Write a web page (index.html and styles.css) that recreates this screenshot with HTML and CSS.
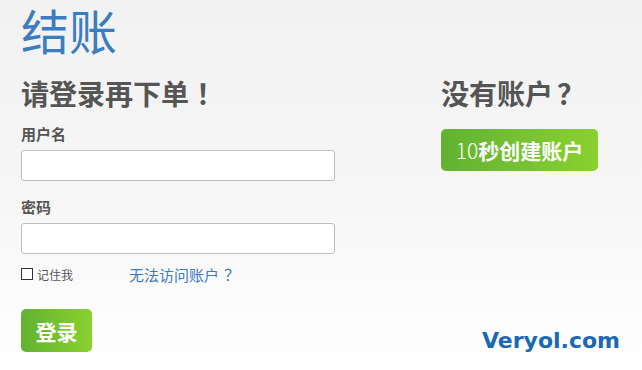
FILE: index.html
```html
<!DOCTYPE html>
<html lang="zh-CN">
<head>
<meta charset="utf-8">
<title>结账</title>
<link rel="stylesheet" href="styles.css">
</head>
<body>
<div class="page">
  <h1 class="title">结账</h1>
  <div class="cols">
    <form class="login">
      <h2 class="heading">请登录再下单<span class="punc">！</span></h2>
      <label class="label">用户名</label>
      <input class="field" type="text">
      <label class="label label-pw">密码</label>
      <input class="field" type="password">
      <div class="row">
        <label class="remember"><span class="box"></span>记住我</label>
        <a class="forgot" href="#">无法访问账户<span class="punc-sm">？</span></a>
      </div>
      <button class="btn btn-login" type="button">登录</button>
    </form>
    <div class="signup">
      <h2 class="heading">没有账户<span class="punc-q">？</span></h2>
      <button class="btn btn-create" type="button"><span class="num">10</span>秒创建账户</button>
    </div>
  </div>
  <div class="brand">Veryol.com</div>
</div>
</body>
</html>
```
FILE: styles.css
```css
html, body {
  margin: 0;
  padding: 0;
}
body {
  width: 642px;
  height: 370px;
  overflow: hidden;
  background: linear-gradient(to bottom, #f2f2f2 0%, #f6f6f6 50%, #ffffff 100%);
  font-family: "Noto Sans CJK SC", sans-serif;
  color: #555;
}
.page {
  position: relative;
  height: 370px;
  padding-left: 21px;
  box-sizing: border-box;
}
.title {
  margin: 0;
  padding-top: 1px;
  font-size: 48px;
  line-height: 56px;
  font-weight: 400;
  color: #3c7cc0;
}
.cols {
  display: flex;
  gap: 106px;
  margin-top: 22px;
}
.login {
  width: 314px;
  display: flex;
  flex-direction: column;
  align-items: flex-start;
  margin: 0;
}
.heading {
  margin: 0;
  font-size: 28px;
  line-height: 28px;
  font-weight: 700;
  color: #555;
}
.punc {
  margin-left: 7px;
}
.punc-q {
  margin-left: 4px;
}
.punc-sm {
  margin-left: 5px;
  font-size: 16px;
}
.label {
  font-size: 15px;
  line-height: 15px;
  font-weight: 700;
  color: #555;
  margin-top: 19px;
}
.label-pw {
  margin-top: 18px;
}
.field {
  margin-top: 9px;
  width: 314px;
  height: 31px;
  box-sizing: border-box;
  border: 1px solid #b9bec4;
  border-radius: 3px;
  background: #fff;
  padding: 0 6px;
}
.row {
  display: flex;
  align-items: center;
  margin-top: 12px;
  height: 16px;
}
.remember {
  display: flex;
  align-items: center;
  font-size: 12px;
  color: #555;
  width: 108px;
}
.box {
  width: 10px;
  height: 10px;
  border: 1px solid #333;
  background: #fff;
  margin-right: 4px;
}
.forgot {
  font-size: 15px;
  color: #3c7cc0;
  text-decoration: none;
}
.btn {
  border: 0;
  border-radius: 5px;
  background: linear-gradient(to right, #62b232 0%, #8ad12f 100%);
  color: #fff;
  font-family: "Noto Sans CJK SC", sans-serif;
  font-weight: 700;
  padding: 0;
  cursor: pointer;
}
.btn-login {
  margin-top: 27px;
  width: 71px;
  height: 43px;
  font-size: 21px;
}
.signup {
  display: flex;
  flex-direction: column;
  align-items: flex-start;
}
.btn-create {
  margin-top: 22px;
  width: 157px;
  height: 42px;
  font-size: 21px;
}
.num {
  font-weight: 300;
}
.brand {
  position: absolute;
  left: 482px;
  top: 328px;
  font-family: "DejaVu Sans", Verdana, sans-serif;
  font-weight: 700;
  font-size: 22px;
  line-height: 26px;
  color: #1a69b3;
}
```
